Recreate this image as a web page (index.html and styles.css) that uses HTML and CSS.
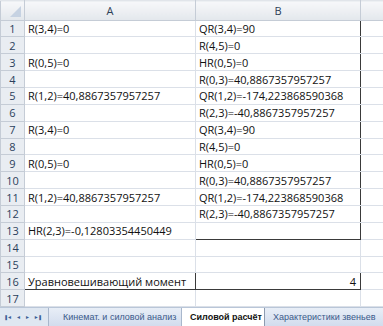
FILE: index.html
```html
<!DOCTYPE html>
<html lang="ru">
<head>
    <meta charset="UTF-8">
    <title>Силовой расчёт</title>
    <link rel="stylesheet" href="styles.css">
</head>
<body>
    <div class="sheet">
        <table class="grid">
            <colgroup>
                <col class="col-num">
                <col class="col-a">
                <col class="col-b">
                <col class="col-c">
            </colgroup>
            <thead>
                <tr>
                    <th class="corner"><span class="tri"></span></th>
                    <th>A</th>
                    <th>B</th>
                    <th></th>
                </tr>
            </thead>
            <tbody>
                <tr><td class="num">1</td><td>R(3,4)=0</td><td class="box box-top">QR(3,4)=90</td><td></td></tr>
                <tr><td class="num">2</td><td></td><td class="box">R(4,5)=0</td><td></td></tr>
                <tr><td class="num">3</td><td>R(0,5)=0</td><td class="box">HR(0,5)=0</td><td></td></tr>
                <tr><td class="num">4</td><td></td><td class="box">R(0,3)=40,8867357957257</td><td></td></tr>
                <tr><td class="num">5</td><td>R(1,2)=40,8867357957257</td><td class="box">QR(1,2)=-174,223868590368</td><td></td></tr>
                <tr><td class="num">6</td><td></td><td class="box">R(2,3)=-40,8867357957257</td><td></td></tr>
                <tr><td class="num">7</td><td>R(3,4)=0</td><td class="box">QR(3,4)=90</td><td></td></tr>
                <tr><td class="num">8</td><td></td><td class="box">R(4,5)=0</td><td></td></tr>
                <tr><td class="num">9</td><td>R(0,5)=0</td><td class="box">HR(0,5)=0</td><td></td></tr>
                <tr><td class="num">10</td><td></td><td class="box">R(0,3)=40,8867357957257</td><td></td></tr>
                <tr><td class="num">11</td><td>R(1,2)=40,8867357957257</td><td class="box">QR(1,2)=-174,223868590368</td><td></td></tr>
                <tr><td class="num">12</td><td></td><td class="box">R(2,3)=-40,8867357957257</td><td></td></tr>
                <tr><td class="num">13</td><td>HR(2,3)=-0,12803354450449</td><td class="box box-bottom"></td><td></td></tr>
                <tr><td class="num">14</td><td></td><td></td><td></td></tr>
                <tr><td class="num">15</td><td></td><td></td><td></td></tr>
                <tr><td class="num">16</td><td class="framed">Уравновешивающий момент</td><td class="framed right">4</td><td></td></tr>
                <tr><td class="num">17</td><td></td><td></td><td></td></tr>
            </tbody>
        </table>
        <div class="tabs">
            <div class="nav">
                <span class="arrow">&#10074;&#9668;</span>
                <span class="arrow">&#9668;</span>
                <span class="arrow">&#9658;</span>
                <span class="arrow">&#9658;&#10074;</span>
            </div>
            <div class="tab first">Кинемат. и силовой анализ</div>
            <div class="tab active">Силовой расчёт</div>
            <div class="tab last">Характеристики звеньев</div>
        </div>
    </div>
</body>
</html>
```

FILE: styles.css
```css
body {
    margin: 0;
    background: #ffffff;
    font-family: "Open Sans", "Noto Sans", sans-serif;
}
.sheet {
    width: 383px;
    height: 326px;
    overflow: hidden;
    display: flex;
    flex-direction: column;
}
.grid {
    border-collapse: collapse;
    table-layout: fixed;
    width: 410px;
    font-size: 11px;
    color: #111;
    flex: none;
}
.col-num { width: 24px; }
.col-a { width: 171px; }
.col-b { width: 165px; }
.col-c { width: 50px; }
th {
    height: 18.5px;
    padding: 0;
    font-weight: normal;
    font-size: 11px;
    color: #2d3f57;
    background: linear-gradient(#f7f8fa, #e3e7ec);
    border: 1px solid #c5ccd6;
    border-top-color: #e1e5ea;
}
.corner {
    position: relative;
}
.tri {
    position: absolute;
    right: 3px;
    bottom: 3px;
    width: 0;
    height: 0;
    border-left: 11px solid transparent;
    border-bottom: 11px solid #c6d2e2;
}
td {
    height: 15.87px;
    padding: 0 0 0 3px;
    border: 1px solid #dbe0e8;
    white-space: nowrap;
    overflow: hidden;
    line-height: 15px;
}
td.num {
    padding: 0;
    text-align: center;
    color: #2b3f5c;
    background: #e9edf2;
    border-color: #c5ccd6;
}
td.box {
    border-left: 1px solid #3a3a3a;
    border-right: 1px solid #3a3a3a;
}
td.box-bottom {
    border-bottom: 1px solid #3a3a3a;
}
td.framed {
    border: 1px solid #3a3a3a;
}
td.right {
    text-align: right;
    padding-right: 4px;
}
.tabs {
    flex: 1;
    display: flex;
    align-items: stretch;
    background: #dfe7f1;
    border-top: 1px solid #b9c6d8;
    font-family: "Liberation Sans", Arial, sans-serif;
    font-size: 9px;
    white-space: nowrap;
}
.nav {
    flex: none;
    display: flex;
    align-items: center;
    gap: 5px;
    padding: 0 0 0 4px;
    width: 44px;
    color: #3b5f95;
    font-size: 5px;
}
.arrow {
    letter-spacing: -1px;
}
.tab {
    flex: none;
    display: flex;
    align-items: center;
    color: #3b5a8a;
    background: linear-gradient(#e8eef7, #d2dced);
    border-right: 1px solid #a8b7cc;
}
.tab.first {
    width: 118px;
    padding-left: 14px;
    border-left: 1px solid #a8b7cc;
}
.tab.active {
    width: 74px;
    padding-left: 8px;
    background: #ffffff;
    color: #111;
    font-weight: bold;
    border-right: 1px solid #8d9bb0;
}
.tab.last {
    width: 112px;
    padding-left: 8px;
}
```
